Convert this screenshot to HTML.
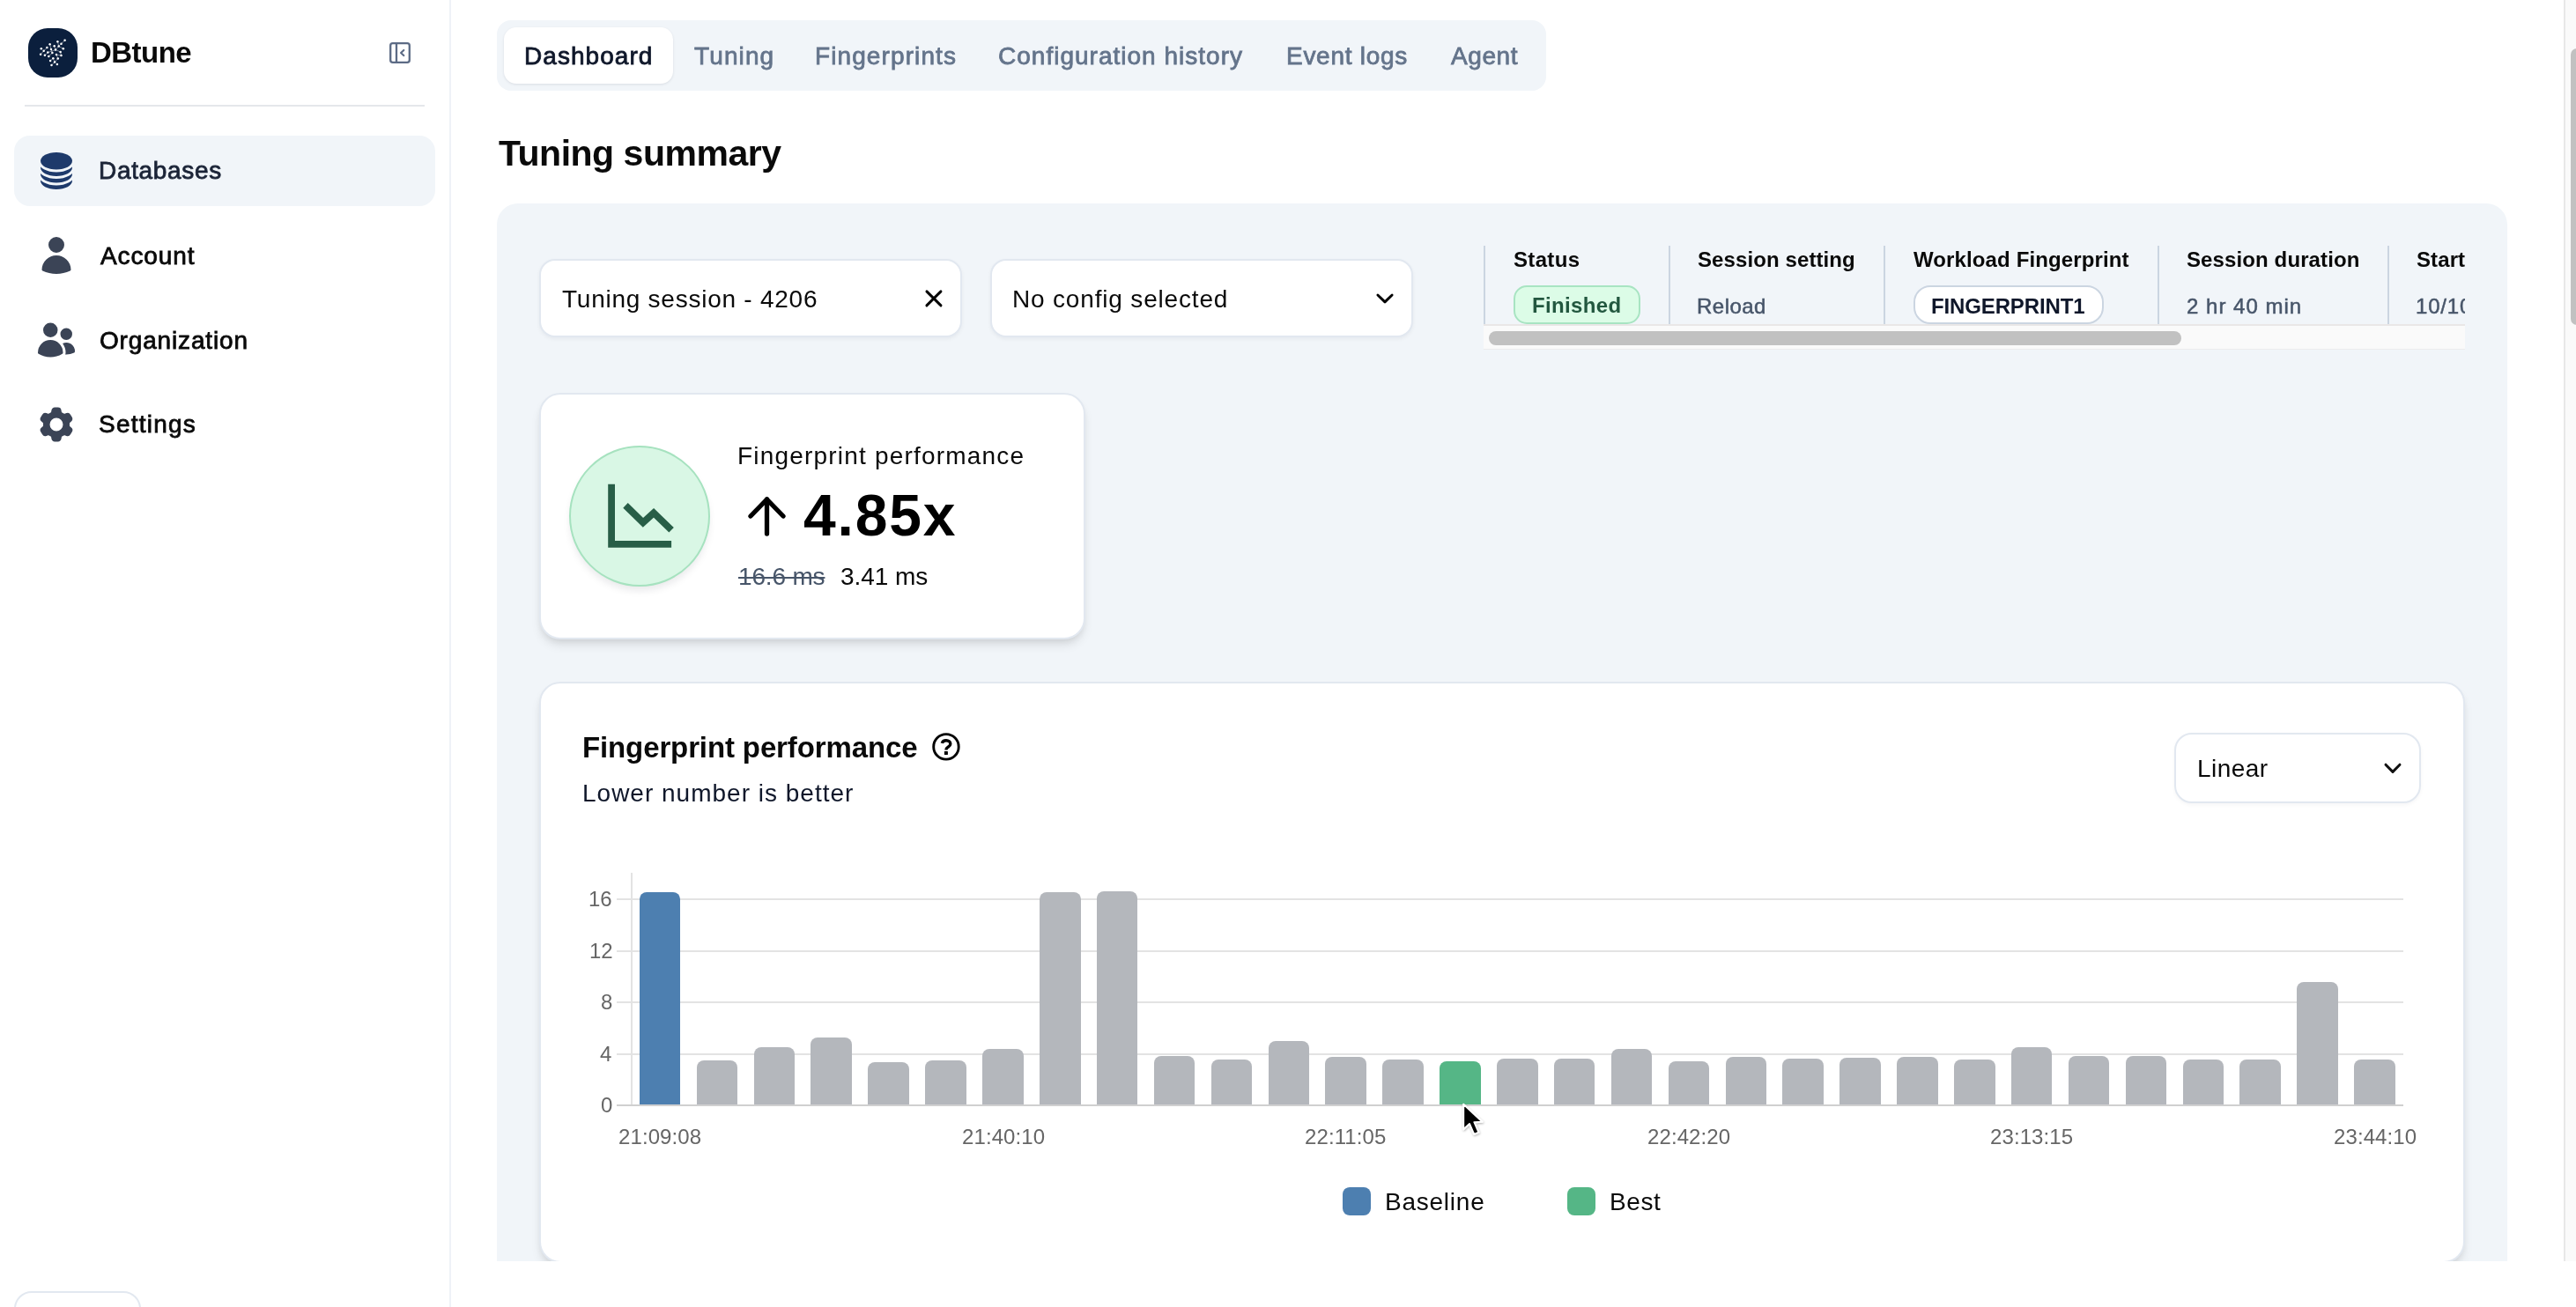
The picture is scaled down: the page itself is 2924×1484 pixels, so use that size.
<!DOCTYPE html>
<html><head><meta charset="utf-8"><title>DBtune</title>
<style>
html,body{margin:0;padding:0;width:2924px;height:1484px;overflow:hidden;background:#fff;
font-family:"Liberation Sans",sans-serif;}
.a{position:absolute;box-sizing:border-box;}
.t{position:absolute;line-height:1;white-space:nowrap;will-change:transform;}
svg{position:absolute;overflow:visible;}
</style></head><body>
<div id="root" style="position:relative;width:2924px;height:1484px;overflow:hidden">
<div class="a" style="left:510px;top:0px;width:2px;height:1484px;background:#eff2f7"></div>
<div class="a" style="left:32px;top:32px;width:56px;height:56px;background:#0b1f3d;border-radius:22px"></div>
<svg style="left:0;top:0" width="120" height="120"><line x1="73.6" y1="45.8" x2="69.5" y2="49.7" stroke="#fff" stroke-width="0.6" opacity="0.75"/><line x1="69.5" y1="49.7" x2="66.7" y2="52.5" stroke="#fff" stroke-width="0.6" opacity="0.75"/><line x1="66.7" y1="52.5" x2="63" y2="56.6" stroke="#fff" stroke-width="0.6" opacity="0.75"/><line x1="63" y1="56.6" x2="54.3" y2="59.6" stroke="#fff" stroke-width="0.6" opacity="0.75"/><line x1="54.3" y1="59.6" x2="50.9" y2="62.8" stroke="#fff" stroke-width="0.6" opacity="0.75"/><line x1="56.6" y1="50.2" x2="58" y2="55.9" stroke="#fff" stroke-width="0.6" opacity="0.75"/><line x1="58" y1="55.9" x2="59.4" y2="60.1" stroke="#fff" stroke-width="0.6" opacity="0.75"/><line x1="59.4" y1="60.1" x2="55.3" y2="64" stroke="#fff" stroke-width="0.6" opacity="0.75"/><line x1="65.4" y1="47.2" x2="66.7" y2="52.5" stroke="#fff" stroke-width="0.6" opacity="0.75"/><line x1="66.7" y1="52.5" x2="71.8" y2="55.3" stroke="#fff" stroke-width="0.6" opacity="0.75"/><line x1="63" y1="56.6" x2="68.6" y2="58.9" stroke="#fff" stroke-width="0.6" opacity="0.75"/><line x1="68.6" y1="58.9" x2="69.5" y2="63.1" stroke="#fff" stroke-width="0.6" opacity="0.75"/><line x1="64" y1="62.1" x2="65.8" y2="66.5" stroke="#fff" stroke-width="0.6" opacity="0.75"/><line x1="65.8" y1="66.5" x2="62.1" y2="70.4" stroke="#fff" stroke-width="0.6" opacity="0.75"/><line x1="62.1" y1="70.4" x2="58.5" y2="74.1" stroke="#fff" stroke-width="0.6" opacity="0.75"/><line x1="60.3" y1="66.3" x2="57.1" y2="69" stroke="#fff" stroke-width="0.6" opacity="0.75"/><line x1="49.7" y1="57.8" x2="46.1" y2="61.7" stroke="#fff" stroke-width="0.6" opacity="0.75"/><line x1="53.4" y1="54.1" x2="49.7" y2="57.8" stroke="#fff" stroke-width="0.6" opacity="0.75"/><line x1="61.7" y1="52.3" x2="63" y2="56.6" stroke="#fff" stroke-width="0.6" opacity="0.75"/><line x1="64" y1="62.1" x2="69.5" y2="63.1" stroke="#fff" stroke-width="0.6" opacity="0.75"/><line x1="60.3" y1="66.3" x2="62.1" y2="70.4" stroke="#fff" stroke-width="0.6" opacity="0.75"/><circle cx="73.6" cy="45.8" r="1.25" fill="#fff"/><circle cx="65.4" cy="47.2" r="1.25" fill="#fff"/><circle cx="69.5" cy="49.7" r="1.25" fill="#fff"/><circle cx="56.6" cy="50.2" r="1.25" fill="#fff"/><circle cx="61.7" cy="52.3" r="1.25" fill="#fff"/><circle cx="66.7" cy="52.5" r="1.25" fill="#fff"/><circle cx="53.4" cy="54.1" r="1.25" fill="#fff"/><circle cx="71.8" cy="55.3" r="1.25" fill="#fff"/><circle cx="46.8" cy="55.3" r="1.25" fill="#fff"/><circle cx="58" cy="55.9" r="1.25" fill="#fff"/><circle cx="63" cy="56.6" r="1.25" fill="#fff"/><circle cx="49.7" cy="57.8" r="1.25" fill="#fff"/><circle cx="68.6" cy="58.9" r="1.25" fill="#fff"/><circle cx="54.3" cy="59.6" r="1.25" fill="#fff"/><circle cx="59.4" cy="60.1" r="1.25" fill="#fff"/><circle cx="46.1" cy="61.7" r="1.25" fill="#fff"/><circle cx="64" cy="62.1" r="1.25" fill="#fff"/><circle cx="50.9" cy="62.8" r="1.25" fill="#fff"/><circle cx="69.5" cy="63.1" r="1.25" fill="#fff"/><circle cx="55.3" cy="64" r="1.25" fill="#fff"/><circle cx="60.3" cy="66.3" r="1.25" fill="#fff"/><circle cx="65.8" cy="66.5" r="1.25" fill="#fff"/><circle cx="57.1" cy="69" r="1.25" fill="#fff"/><circle cx="62.1" cy="70.4" r="1.25" fill="#fff"/><circle cx="64.9" cy="72.9" r="1.25" fill="#fff"/><circle cx="58.5" cy="74.1" r="1.25" fill="#fff"/></svg>
<div class="t" style="left:103.40px;top:42.67px;font-size:33px;font-weight:700;color:#0a0a0a;letter-spacing:-0.520px;">DBtune</div>
<svg style="left:442px;top:48px" width="24" height="24" viewBox="0 0 24 24" fill="none" stroke="#5c6b85" stroke-width="2.3" stroke-linecap="round" stroke-linejoin="round"><rect x="1.2" y="1.2" width="21.6" height="21.6" rx="2.6"/><line x1="8" y1="1.2" x2="8" y2="22.8"/><polyline points="16.3,9 13.1,12 16.3,15" stroke-width="2.2"/></svg>
<div class="a" style="left:28px;top:119px;width:454px;height:2px;background:#e5e7eb"></div>
<div class="a" style="left:16px;top:154px;width:478px;height:80px;background:#f1f5f9;border-radius:18px"></div>
<svg style="left:40px;top:170px" width="48" height="48" viewBox="0 0 24 24" fill="#1e3a6b"><path d="M21 6.375c0 2.692-4.03 4.875-9 4.875S3 9.067 3 6.375 7.03 1.5 12 1.5s9 2.183 9 4.875Z"/><path d="M12 12.75c2.685 0 5.19-.586 7.078-1.609a8.283 8.283 0 0 0 1.897-1.384c.016.121.025.244.025.368C21 12.817 16.97 15 12 15s-9-2.183-9-4.875c0-.124.009-.247.025-.368a8.285 8.285 0 0 0 1.897 1.384C6.809 12.164 9.315 12.75 12 12.75Z"/><path d="M12 16.5c2.685 0 5.19-.586 7.078-1.609a8.282 8.282 0 0 0 1.897-1.384c.016.121.025.244.025.368 0 2.692-4.03 4.875-9 4.875s-9-2.183-9-4.875c0-.124.009-.247.025-.368a8.284 8.284 0 0 0 1.897 1.384C6.809 15.914 9.315 16.5 12 16.5Z"/><path d="M12 20.25c2.685 0 5.19-.586 7.078-1.609a8.284 8.284 0 0 0 1.897-1.384c.016.121.025.244.025.368 0 2.692-4.03 4.875-9 4.875s-9-2.183-9-4.875c0-.124.009-.247.025-.368a8.284 8.284 0 0 0 1.897 1.384C6.809 19.664 9.315 20.25 12 20.25Z"/></svg>
<svg style="left:40px;top:266px" width="48" height="48" viewBox="0 0 24 24" fill="#3b4456"><path fill-rule="evenodd" d="M7.5 6a4.5 4.5 0 1 1 9 0 4.5 4.5 0 0 1-9 0ZM3.751 20.105a8.25 8.25 0 0 1 16.498 0 .75.75 0 0 1-.437.695A18.683 18.683 0 0 1 12 22.5c-2.786 0-5.433-.608-7.812-1.7a.75.75 0 0 1-.437-.695Z" clip-rule="evenodd"/></svg>
<svg style="left:40px;top:362px" width="48" height="48" viewBox="0 0 24 24" fill="#3b4456"><path d="M4.5 6.375a4.125 4.125 0 1 1 8.25 0 4.125 4.125 0 0 1-8.25 0ZM14.25 8.625a3.375 3.375 0 1 1 6.75 0 3.375 3.375 0 0 1-6.75 0ZM1.5 19.125a7.125 7.125 0 0 1 14.25 0v.003l-.001.119a.75.75 0 0 1-.363.63 13.067 13.067 0 0 1-6.761 1.873c-2.472 0-4.786-.684-6.76-1.873a.75.75 0 0 1-.364-.63l-.001-.122ZM17.25 19.128l-.001.144a2.25 2.25 0 0 1-.233.96 10.088 10.088 0 0 0 5.06-1.01.75.75 0 0 0 .42-.643 4.875 4.875 0 0 0-6.957-4.611 8.586 8.586 0 0 1 1.71 5.157v.003Z"/></svg>
<svg style="left:40px;top:458px" width="48" height="48" viewBox="0 0 24 24" fill="#3b4456"><path fill-rule="evenodd" d="M11.078 2.25c-.917 0-1.699.663-1.85 1.567L9.05 4.889c-.02.12-.115.26-.297.348a7.493 7.493 0 0 0-.986.57c-.166.115-.334.126-.45.083L6.3 5.508a1.875 1.875 0 0 0-2.282.819l-.922 1.597a1.875 1.875 0 0 0 .432 2.385l.84.692c.095.078.17.229.154.43a7.598 7.598 0 0 0 0 1.139c.015.2-.059.352-.153.43l-.841.692a1.875 1.875 0 0 0-.432 2.385l.922 1.597a1.875 1.875 0 0 0 2.282.818l1.019-.382c.115-.043.283-.031.45.082.312.214.641.405.985.57.182.088.277.228.297.35l.178 1.071c.151.904.933 1.567 1.85 1.567h1.844c.916 0 1.699-.663 1.85-1.567l.178-1.072c.02-.12.114-.26.297-.349.344-.165.673-.356.985-.57.167-.114.335-.125.45-.082l1.02.382a1.875 1.875 0 0 0 2.28-.819l.923-1.597a1.875 1.875 0 0 0-.432-2.385l-.84-.692c-.095-.078-.17-.229-.154-.43a7.614 7.614 0 0 0 0-1.139c-.016-.2.059-.352.153-.43l.84-.692c.708-.582.891-1.59.433-2.385l-.922-1.597a1.875 1.875 0 0 0-2.282-.818l-1.02.382c-.114.043-.282.031-.449-.083a7.49 7.49 0 0 0-.985-.57c-.183-.087-.277-.227-.297-.348l-.179-1.072a1.875 1.875 0 0 0-1.85-1.567h-1.843ZM12 15.75a3.75 3.75 0 1 0 0-7.5 3.75 3.75 0 0 0 0 7.5Z" clip-rule="evenodd"/></svg>
<div class="t" style="left:111.80px;top:180.30px;font-size:28px;font-weight:400;color:#1b2437;letter-spacing:0.675px;-webkit-text-stroke:0.8px #1b2437">Databases</div>
<div class="t" style="left:114.00px;top:276.90px;font-size:28px;font-weight:400;color:#0a0a0a;letter-spacing:0.883px;-webkit-text-stroke:0.8px #0a0a0a">Account</div>
<div class="t" style="left:113.00px;top:372.70px;font-size:28px;font-weight:400;color:#0a0a0a;letter-spacing:0.836px;-webkit-text-stroke:0.8px #0a0a0a">Organization</div>
<div class="t" style="left:112.00px;top:468.10px;font-size:28px;font-weight:400;color:#0a0a0a;letter-spacing:1.243px;-webkit-text-stroke:0.8px #0a0a0a">Settings</div>
<div class="a" style="left:16px;top:1466px;width:144px;height:54px;border:2px solid #e2e8f0;border-radius:20px;background:#fff"></div>
<div class="a" style="left:564px;top:23px;width:1191px;height:80px;background:#f1f5f9;border-radius:16px"></div>
<div class="a" style="left:572px;top:31px;width:192px;height:64px;background:#fff;border-radius:14px;box-shadow:0 1px 3px rgba(15,23,42,0.10)"></div>
<div class="t" style="left:595.40px;top:49.70px;font-size:28px;font-weight:400;color:#0f172a;letter-spacing:1.050px;-webkit-text-stroke:0.8px #0f172a">Dashboard</div>
<div class="t" style="left:788.00px;top:49.70px;font-size:28px;font-weight:400;color:#64748b;letter-spacing:1.120px;-webkit-text-stroke:0.8px #64748b">Tuning</div>
<div class="t" style="left:924.80px;top:49.70px;font-size:28px;font-weight:400;color:#64748b;letter-spacing:1.100px;-webkit-text-stroke:0.8px #64748b">Fingerprints</div>
<div class="t" style="left:1133.40px;top:49.70px;font-size:28px;font-weight:400;color:#64748b;letter-spacing:1.010px;-webkit-text-stroke:0.8px #64748b">Configuration history</div>
<div class="t" style="left:1459.80px;top:49.70px;font-size:28px;font-weight:400;color:#64748b;letter-spacing:0.722px;-webkit-text-stroke:0.8px #64748b">Event logs</div>
<div class="t" style="left:1646.60px;top:49.70px;font-size:28px;font-weight:400;color:#64748b;letter-spacing:0.575px;-webkit-text-stroke:0.8px #64748b">Agent</div>
<div class="t" style="left:565.80px;top:154.19px;font-size:41px;font-weight:700;color:#0a0a0a;letter-spacing:-0.485px;">Tuning summary</div>
<div class="a" style="left:511px;top:0;width:2399px;height:1432px;overflow:hidden">
<div class="a" style="left:53px;top:231px;width:2282px;height:1269px;background:#f1f5f9;border-radius:24px"></div>
<div class="a" style="left:101px;top:294px;width:480px;height:89px;background:#fff;border:2px solid #e2e8f0;border-radius:18px;box-shadow:0 2px 4px rgba(15,23,42,0.05)"></div>
<div class="t" style="left:127.00px;top:325.60px;font-size:28px;font-weight:400;color:#0a0a0a;letter-spacing:0.750px;">Tuning session - 4206</div>
<svg style="left:537px;top:328px" width="24" height="24" viewBox="0 0 24 24" fill="none" stroke="#000" stroke-width="2.9" stroke-linecap="round"><line x1="3.9" y1="2.9" x2="20" y2="18.9"/><line x1="20" y1="2.9" x2="3.9" y2="18.9"/></svg>
<div class="a" style="left:613px;top:294px;width:480px;height:89px;background:#fff;border:2px solid #e2e8f0;border-radius:18px;box-shadow:0 2px 4px rgba(15,23,42,0.05)"></div>
<div class="t" style="left:638.00px;top:325.60px;font-size:28px;font-weight:400;color:#0a0a0a;letter-spacing:0.824px;">No config selected</div>
<svg style="left:1049px;top:330px" width="24" height="16" viewBox="0 0 24 16" fill="none" stroke="#000" stroke-width="2.9" stroke-linecap="round" stroke-linejoin="round"><polyline points="3.9,5 12,12.9 20.1,5"/></svg>
<div class="a" style="left:1173px;top:270px;width:1114px;height:130px;overflow:hidden">
<div class="a" style="left:0px;top:9px;width:2px;height:90px;background:#cbd5e1"></div>
<div class="a" style="left:210px;top:9px;width:2px;height:90px;background:#cbd5e1"></div>
<div class="a" style="left:454px;top:9px;width:2px;height:90px;background:#cbd5e1"></div>
<div class="a" style="left:765px;top:9px;width:2px;height:90px;background:#cbd5e1"></div>
<div class="a" style="left:1026px;top:9px;width:2px;height:90px;background:#cbd5e1"></div>
<div class="t" style="left:34.00px;top:12.68px;font-size:24px;font-weight:700;color:#0a0a0a;letter-spacing:0.340px;">Status</div>
<div class="t" style="left:243.30px;top:12.68px;font-size:24px;font-weight:700;color:#0a0a0a;letter-spacing:0.100px;">Session setting</div>
<div class="t" style="left:488.00px;top:12.68px;font-size:24px;font-weight:700;color:#0a0a0a;letter-spacing:0.121px;">Workload Fingerprint</div>
<div class="t" style="left:798.30px;top:12.68px;font-size:24px;font-weight:700;color:#0a0a0a;letter-spacing:0.113px;">Session duration</div>
<div class="t" style="left:1059.00px;top:12.68px;font-size:24px;font-weight:700;color:#0a0a0a;letter-spacing:0.100px;">Start</div>
<div class="a" style="left:34px;top:54px;width:144px;height:44px;background:#dcfce7;border:2px solid #a8e4c2;border-radius:15px"></div>
<div class="t" style="left:55.00px;top:64.68px;font-size:24px;font-weight:700;color:#22573f;letter-spacing:0.343px;">Finished</div>
<div class="t" style="left:242.30px;top:65.68px;font-size:24px;font-weight:400;color:#475569;letter-spacing:0.480px;-webkit-text-stroke:0.5px #475569">Reload</div>
<div class="a" style="left:488px;top:54px;width:216px;height:44px;background:#fff;border:2px solid #cbd5e1;border-radius:19px"></div>
<div class="t" style="left:508.20px;top:65.68px;font-size:24px;font-weight:700;color:#0f172a;letter-spacing:-0.136px;">FINGERPRINT1</div>
<div class="t" style="left:798.30px;top:65.68px;font-size:24px;font-weight:400;color:#475569;letter-spacing:1.010px;-webkit-text-stroke:0.5px #475569">2 hr 40 min</div>
<div class="t" style="left:1058.00px;top:65.68px;font-size:24px;font-weight:400;color:#475569;letter-spacing:0.800px;-webkit-text-stroke:0.5px #475569">10/10/2024</div>
<div class="a" style="left:0px;top:98px;width:1114px;height:29px;background:#fafafa;border-top:2px solid #e9e7e7;border-bottom:1px solid #ececec"></div>
<div class="a" style="left:6px;top:106px;width:786px;height:16px;background:#c1c1c1;border-radius:8px"></div>
</div>
<div class="a" style="left:101px;top:446px;width:620px;height:280px;background:#fff;border:2px solid #e2e8f0;border-radius:24px;box-shadow:0 8px 12px -2px rgba(0,0,0,0.10),0 4px 8px -4px rgba(0,0,0,0.10)"></div>
<div class="a" style="left:135px;top:506px;width:160px;height:160px;background:#d9f7e5;border:2px solid #a6e2bf;border-radius:50%;box-shadow:0 6px 10px -2px rgba(15,23,42,0.10)"></div>
<svg style="left:135px;top:506px" width="160" height="160" viewBox="0 0 160 160" fill="none" stroke="#285e47" stroke-width="7.8"><polyline points="48.1,43.8 48.1,111.85 116.1,111.85" stroke-linecap="butt" stroke-linejoin="miter"/><polyline points="64,67.9 83.9,87.4 96,76.3 116.1,95.8" stroke-linecap="butt" stroke-linejoin="miter"/></svg>
<div class="t" style="left:325.50px;top:504.20px;font-size:28px;font-weight:400;color:#0a0a0a;letter-spacing:1.191px;">Fingerprint performance</div>
<svg style="left:335.5px;top:564px" width="48" height="46" viewBox="0 0 48 46" fill="none" stroke="#000" stroke-width="5.3" stroke-linecap="round" stroke-linejoin="round"><polyline points="5,22 23.5,3 42,22"/><line x1="23.5" y1="3" x2="23.5" y2="42"/></svg>
<div class="t" style="left:401.00px;top:552.43px;font-size:66px;font-weight:700;color:#000;letter-spacing:1.800px;">4.85x</div>
<div class="t" style="left:326.50px;top:640.50px;font-size:28px;font-weight:400;color:#475569;letter-spacing:-0.167px;text-decoration:line-through;text-decoration-thickness:2px">16.6 ms</div>
<div class="t" style="left:443.30px;top:640.50px;font-size:28px;font-weight:400;color:#0a0a0a;letter-spacing:-0.050px;">3.41 ms</div>
<div class="a" style="left:101px;top:774px;width:2186px;height:660px;background:#fff;border:2px solid #e2e8f0;border-radius:24px;box-shadow:0 8px 12px -2px rgba(0,0,0,0.10),0 4px 8px -4px rgba(0,0,0,0.10)"></div>
<div class="t" style="left:150.00px;top:831.77px;font-size:33px;font-weight:700;color:#0a0a0a;letter-spacing:-0.123px;">Fingerprint performance</div>
<svg style="left:545px;top:830px" width="36" height="36" viewBox="0 0 36 36" fill="none" stroke="#000"><circle cx="17.95" cy="17.9" r="14.25" stroke-width="2.9"/><path d="M13.3 13.9 C13.9 11.7 15.7 10.7 18 10.7 C20.8 10.7 22.8 12.4 22.8 14.7 C22.8 16.7 21.3 17.5 19.9 18.4 C18.6 19.2 17.9 19.9 17.9 21.4" stroke-width="3.4" stroke-linecap="butt"/><rect x="15.9" y="23.0" width="4.0" height="4.0" rx="0.6" fill="#000" stroke="none"/></svg>
<div class="t" style="left:150.00px;top:886.50px;font-size:28px;font-weight:400;color:#0f172a;letter-spacing:1.000px;">Lower number is better</div>
<div class="a" style="left:1957px;top:832px;width:280px;height:80px;background:#fff;border:2px solid #e2e8f0;border-radius:20px;box-shadow:0 2px 4px rgba(15,23,42,0.04)"></div>
<div class="t" style="left:1982.60px;top:859.00px;font-size:28px;font-weight:400;color:#0a0a0a;letter-spacing:0.460px;">Linear</div>
<svg style="left:2193px;top:864px" width="24" height="16" viewBox="0 0 24 16" fill="none" stroke="#111" stroke-width="3" stroke-linecap="round" stroke-linejoin="round"><polyline points="4,4.2 12,12.4 20,4.2"/></svg>
<div class="a" style="left:205px;top:991px;width:2px;height:265px;background:#e3e3e3"></div>
<div class="a" style="left:189px;top:1020px;width:2028px;height:2px;background:#e3e3e3"></div>
<div class="t" style="left:156.80px;top:1009.18px;font-size:24px;font-weight:400;color:#666;letter-spacing:0.000px;">16</div>
<div class="a" style="left:189px;top:1079px;width:2028px;height:2px;background:#e3e3e3"></div>
<div class="t" style="left:157.80px;top:1068.18px;font-size:24px;font-weight:400;color:#666;letter-spacing:0.000px;">12</div>
<div class="a" style="left:189px;top:1137px;width:2028px;height:2px;background:#e3e3e3"></div>
<div class="t" style="left:170.80px;top:1126.18px;font-size:24px;font-weight:400;color:#666;letter-spacing:0.000px;">8</div>
<div class="a" style="left:189px;top:1196px;width:2028px;height:2px;background:#e3e3e3"></div>
<div class="t" style="left:169.80px;top:1185.18px;font-size:24px;font-weight:400;color:#666;letter-spacing:0.000px;">4</div>
<div class="a" style="left:189px;top:1254px;width:2028px;height:2px;background:#d0d0d0"></div>
<div class="t" style="left:170.80px;top:1243.18px;font-size:24px;font-weight:400;color:#666;letter-spacing:0.000px;">0</div>
<div class="a" style="left:214.8px;top:1012.8px;width:46.6px;height:241.2px;background:#4d7fb0;border-radius:8px 8px 0 0"></div>
<div class="a" style="left:279.7px;top:1203.8px;width:46.6px;height:50.2px;background:#b4b7bc;border-radius:8px 8px 0 0"></div>
<div class="a" style="left:344.6px;top:1188.8px;width:46.6px;height:65.2px;background:#b4b7bc;border-radius:8px 8px 0 0"></div>
<div class="a" style="left:409.4px;top:1178.0px;width:46.6px;height:76.0px;background:#b4b7bc;border-radius:8px 8px 0 0"></div>
<div class="a" style="left:474.3px;top:1205.7px;width:46.6px;height:48.3px;background:#b4b7bc;border-radius:8px 8px 0 0"></div>
<div class="a" style="left:539.2px;top:1203.5px;width:46.6px;height:50.5px;background:#b4b7bc;border-radius:8px 8px 0 0"></div>
<div class="a" style="left:604.1px;top:1190.8px;width:46.6px;height:63.2px;background:#b4b7bc;border-radius:8px 8px 0 0"></div>
<div class="a" style="left:669.0px;top:1013.0px;width:46.6px;height:241.0px;background:#b4b7bc;border-radius:8px 8px 0 0"></div>
<div class="a" style="left:733.8px;top:1012.3px;width:46.6px;height:241.7px;background:#b4b7bc;border-radius:8px 8px 0 0"></div>
<div class="a" style="left:798.7px;top:1199.4px;width:46.6px;height:54.6px;background:#b4b7bc;border-radius:8px 8px 0 0"></div>
<div class="a" style="left:863.6px;top:1203.3px;width:46.6px;height:50.7px;background:#b4b7bc;border-radius:8px 8px 0 0"></div>
<div class="a" style="left:928.5px;top:1181.7px;width:46.6px;height:72.3px;background:#b4b7bc;border-radius:8px 8px 0 0"></div>
<div class="a" style="left:993.4px;top:1200.4px;width:46.6px;height:53.6px;background:#b4b7bc;border-radius:8px 8px 0 0"></div>
<div class="a" style="left:1058.2px;top:1202.7px;width:46.6px;height:51.3px;background:#b4b7bc;border-radius:8px 8px 0 0"></div>
<div class="a" style="left:1123.1px;top:1205.3px;width:46.6px;height:48.7px;background:#55b686;border-radius:8px 8px 0 0"></div>
<div class="a" style="left:1188.0px;top:1201.7px;width:46.6px;height:52.3px;background:#b4b7bc;border-radius:8px 8px 0 0"></div>
<div class="a" style="left:1252.9px;top:1202.0px;width:46.6px;height:52.0px;background:#b4b7bc;border-radius:8px 8px 0 0"></div>
<div class="a" style="left:1317.8px;top:1191.3px;width:46.6px;height:62.7px;background:#b4b7bc;border-radius:8px 8px 0 0"></div>
<div class="a" style="left:1382.6px;top:1205.0px;width:46.6px;height:49.0px;background:#b4b7bc;border-radius:8px 8px 0 0"></div>
<div class="a" style="left:1447.5px;top:1200.1px;width:46.6px;height:53.9px;background:#b4b7bc;border-radius:8px 8px 0 0"></div>
<div class="a" style="left:1512.4px;top:1201.7px;width:46.6px;height:52.3px;background:#b4b7bc;border-radius:8px 8px 0 0"></div>
<div class="a" style="left:1577.3px;top:1200.7px;width:46.6px;height:53.3px;background:#b4b7bc;border-radius:8px 8px 0 0"></div>
<div class="a" style="left:1642.2px;top:1199.9px;width:46.6px;height:54.1px;background:#b4b7bc;border-radius:8px 8px 0 0"></div>
<div class="a" style="left:1707.0px;top:1202.5px;width:46.6px;height:51.5px;background:#b4b7bc;border-radius:8px 8px 0 0"></div>
<div class="a" style="left:1771.9px;top:1189.0px;width:46.6px;height:65.0px;background:#b4b7bc;border-radius:8px 8px 0 0"></div>
<div class="a" style="left:1836.8px;top:1199.1px;width:46.6px;height:54.9px;background:#b4b7bc;border-radius:8px 8px 0 0"></div>
<div class="a" style="left:1901.7px;top:1198.8px;width:46.6px;height:55.2px;background:#b4b7bc;border-radius:8px 8px 0 0"></div>
<div class="a" style="left:1966.6px;top:1203.3px;width:46.6px;height:50.7px;background:#b4b7bc;border-radius:8px 8px 0 0"></div>
<div class="a" style="left:2031.4px;top:1203.3px;width:46.6px;height:50.7px;background:#b4b7bc;border-radius:8px 8px 0 0"></div>
<div class="a" style="left:2096.3px;top:1114.8px;width:46.6px;height:139.2px;background:#b4b7bc;border-radius:8px 8px 0 0"></div>
<div class="a" style="left:2161.2px;top:1202.7px;width:46.6px;height:51.3px;background:#b4b7bc;border-radius:8px 8px 0 0"></div>
<div class="t" style="left:191.25px;top:1278.68px;font-size:24px;font-weight:400;color:#666;letter-spacing:0.100px;">21:09:08</div>
<div class="t" style="left:580.53px;top:1278.68px;font-size:24px;font-weight:400;color:#666;letter-spacing:0.100px;">21:40:10</div>
<div class="t" style="left:970.31px;top:1278.68px;font-size:24px;font-weight:400;color:#666;letter-spacing:0.100px;">22:11:05</div>
<div class="t" style="left:1359.09px;top:1278.68px;font-size:24px;font-weight:400;color:#666;letter-spacing:0.100px;">22:42:20</div>
<div class="t" style="left:1748.37px;top:1278.68px;font-size:24px;font-weight:400;color:#666;letter-spacing:0.100px;">23:13:15</div>
<div class="t" style="left:2137.65px;top:1278.68px;font-size:24px;font-weight:400;color:#666;letter-spacing:0.100px;">23:44:10</div>
<div class="a" style="left:1013px;top:1348px;width:32px;height:32px;background:#4d7fb0;border-radius:8px"></div>
<div class="t" style="left:1060.60px;top:1350.60px;font-size:28px;font-weight:400;color:#0a0a0a;letter-spacing:0.757px;">Baseline</div>
<div class="a" style="left:1268px;top:1348px;width:32px;height:32px;background:#55b686;border-radius:8px"></div>
<div class="t" style="left:1316.30px;top:1350.60px;font-size:28px;font-weight:400;color:#0a0a0a;letter-spacing:0.600px;">Best</div>
<svg style="left:1147px;top:1251px" width="34" height="44" viewBox="0 0 17 22"><defs><filter id="cs" x="-50%" y="-50%" width="200%" height="200%"><feDropShadow dx="0.3" dy="0.6" stdDeviation="0.6" flood-opacity="0.3"/></filter></defs><path d="M1.6 1.4 L1.6 15.6 L5.0 12.5 L7.6 18.4 L10.2 17.3 L7.7 11.6 L12.3 11.4 Z" fill="#000" stroke="#fff" stroke-width="1.0" stroke-linejoin="round" filter="url(#cs)"/></svg>
</div>
<div class="a" style="left:2910px;top:0px;width:2px;height:1432px;background:#e8e8e8"></div>
<div class="a" style="left:2912px;top:0px;width:12px;height:1432px;background:#fafafa"></div>
<div class="a" style="left:2918px;top:55px;width:14px;height:314px;background:#c1c1c1;border-radius:7px"></div>
</div></body></html>
